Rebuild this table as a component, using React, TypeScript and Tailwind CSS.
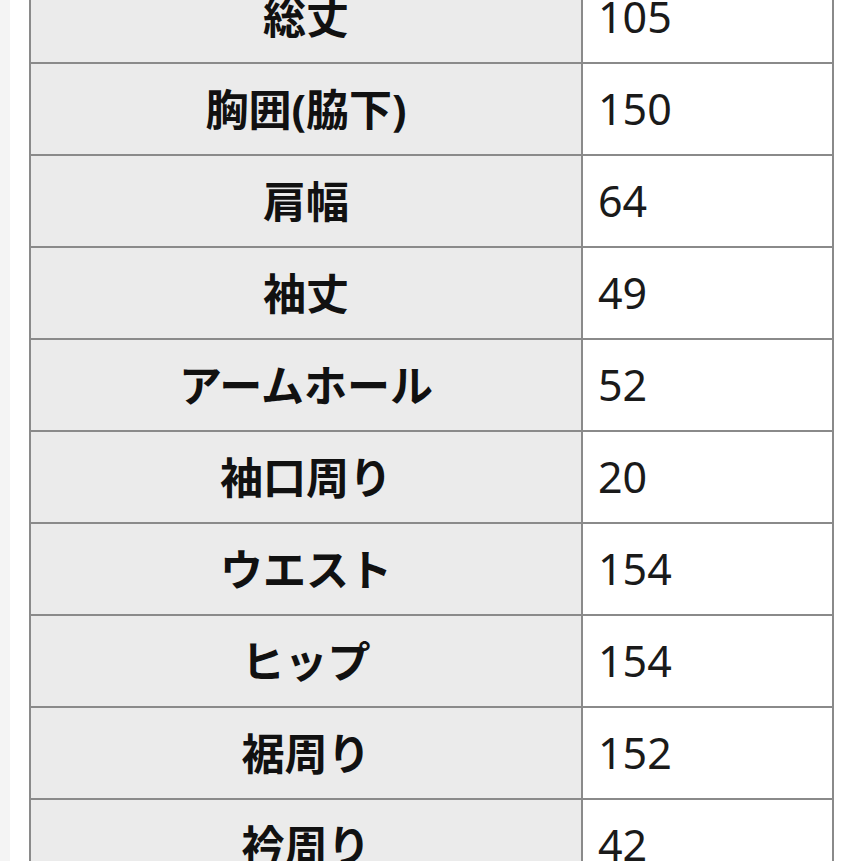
import React from "react";

const ROWS = [
  { label: "総丈", value: "105" },
  { label: "胸囲(脇下)", value: "150" },
  { label: "肩幅", value: "64" },
  { label: "袖丈", value: "49" },
  { label: "アームホール", value: "52" },
  { label: "袖口周り", value: "20" },
  { label: "ウエスト", value: "154" },
  { label: "ヒップ", value: "154" },
  { label: "裾周り", value: "152" },
  { label: "衿周り", value: "42" },
];

export default function App() {
  return (
    <div
      className="flex h-[861px] w-[861px] overflow-hidden bg-white"
      style={{ fontFamily: '"Noto Sans", "Noto Sans CJK JP", sans-serif' }}
    >
      <div className="w-[10px] shrink-0 bg-[#f4f4f4]" />
      <div className="ml-[19px] mt-[-28px] h-fit w-[805px] border-x-2 border-[#8a8a8a]">
        {ROWS.map((row) => (
          <div key={row.label} className="flex h-[92px] border-b-2 border-[#8a8a8a]">
            <div className="flex w-[552px] items-center justify-center border-r-2 border-[#8a8a8a] bg-[#ebebeb] pt-[2px] text-[43px] font-bold text-[#111]">
              {row.label}
            </div>
            <div className="flex flex-1 items-center pl-[15px] text-[43px] text-[#1a1a1a]">
              {row.value}
            </div>
          </div>
        ))}
      </div>
    </div>
  );
}
